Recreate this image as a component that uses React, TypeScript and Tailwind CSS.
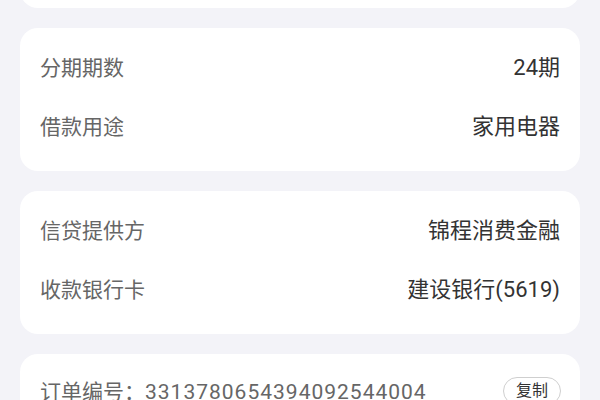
import React from 'react';

const font = { fontFamily: 'Roboto, "Noto Sans CJK SC", sans-serif' };

function Row({ label, value }: { label: string; value: string }) {
  return (
    <div className="flex h-[28px] items-center justify-between">
      <span className="text-[#666666]">{label}</span>
      <span className="text-[22px] text-[#333333]">{value}</span>
    </div>
  );
}

function InfoCard({ rows }: { rows: { label: string; value: string }[] }) {
  return (
    <div className="flex flex-col gap-[31px] rounded-[18px] bg-white px-5 pt-[26px] pb-[30px]">
      {rows.map((r) => (
        <Row key={r.label} label={r.label} value={r.value} />
      ))}
    </div>
  );
}

export default function App() {
  return (
    <div
      className="flex h-[400px] w-[600px] flex-col gap-5 overflow-hidden bg-[#f3f3f8] px-5 text-[21px] leading-none"
      style={font}
    >
      {/* previous card, mostly scrolled off */}
      <div className="-mt-[112px] h-[120px] shrink-0 rounded-[18px] bg-white" />

      <InfoCard
        rows={[
          { label: '分期期数', value: '24期' },
          { label: '借款用途', value: '家用电器' },
        ]}
      />

      <InfoCard
        rows={[
          { label: '信贷提供方', value: '锦程消费金融' },
          { label: '收款银行卡', value: '建设银行(5619)' },
        ]}
      />

      <div className="shrink-0 rounded-[18px] bg-white px-5 pt-[23px] pb-6">
        <div className="flex items-start justify-between">
          <span className="mt-[5px] text-[#666666]">
            订单编号：<span className="tracking-[1px]">3313780654394092544004</span>
          </span>
          <button className="-mr-[1px] rounded-full border border-[#cfcfcf] px-[12px] py-[5px] text-[16px] text-[#333333]">
            复制
          </button>
        </div>
      </div>
    </div>
  );
}
